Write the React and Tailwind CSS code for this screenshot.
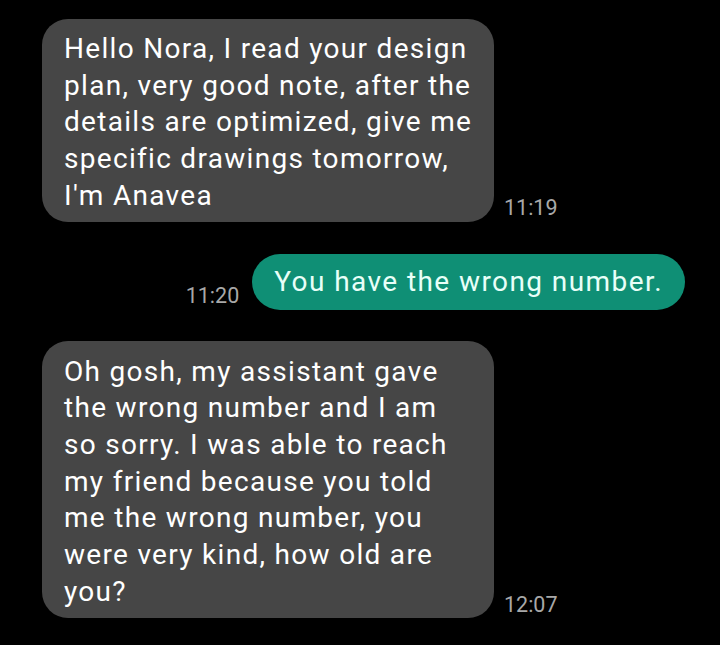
export default function App() {
  const first = [
    'Hello Nora, I read your design',
    'plan, very good note, after the',
    'details are optimized, give me',
    'specific drawings tomorrow,',
    "I'm Anavea",
  ];
  const last = [
    'Oh gosh, my assistant gave',
    'the wrong number and I am',
    'so sorry. I was able to reach',
    'my friend because you told',
    'me the wrong number, you',
    'were very kind, how old are',
    'you?',
  ];

  return (
    <div className="w-[720px] h-[645px] bg-black overflow-hidden font-['Roboto',sans-serif] pt-[19px]">
      <div className="flex items-end pl-[42px]">
        <div className="w-[452px] bg-[#464646] rounded-[26px] pl-[22px] pt-[12px] pb-[7px] text-white text-[28px] tracking-[1.3px] leading-[36.7px]">
          {first.map(l => <div key={l} className="whitespace-nowrap">{l}</div>)}
        </div>
        <span className="ml-[10px] mb-[1.5px] text-[#a8a8a8] text-[21.5px] leading-[24px]">11:19</span>
      </div>

      <div className="flex items-end justify-end pr-[35px] mt-[32px]">
        <span className="mr-[13px] mb-[1.5px] text-[#a8a8a8] text-[21.5px] leading-[24px]">11:20</span>
        <div className="h-[56px] bg-[#0f8f75] rounded-full px-[22px] flex items-center text-[#e8fff8] text-[28px] tracking-[1.42px] whitespace-nowrap">
          You have the wrong number.
        </div>
      </div>

      <div className="flex items-end pl-[42px] mt-[31px]">
        <div className="w-[452px] bg-[#464646] rounded-[26px] pl-[22px] pt-[13px] pb-[8px] text-white text-[28px] tracking-[1.3px] leading-[36.7px]">
          {last.map(l => <div key={l} className="whitespace-nowrap">{l}</div>)}
        </div>
        <span className="ml-[10px] mb-[1.5px] text-[#a8a8a8] text-[21.5px] leading-[24px]">12:07</span>
      </div>
    </div>
  );
}
